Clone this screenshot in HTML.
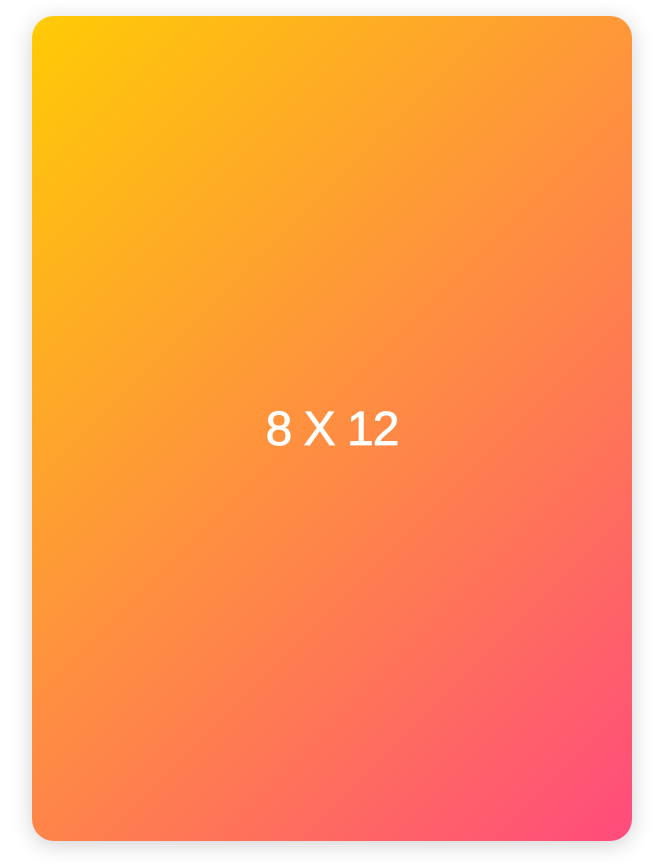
<!DOCTYPE html>
<html><head><style>
html,body{margin:0;padding:0;background:#fff;width:658px;height:862px;overflow:hidden}
.card{position:absolute;left:32px;top:16px;width:600px;height:825px;border-radius:22px;
background:linear-gradient(135deg,#ffcb05 0%,#fe9a36 40%,#fe7b52 65%,#ff4b7d 100%);
box-shadow:0 4px 22px rgba(0,0,0,0.18);}
.t{position:absolute;left:0;right:0;top:382px;text-align:center;color:#fff;
font-family:"Liberation Sans",sans-serif;font-size:48px;line-height:64px;letter-spacing:-1px;
-webkit-text-stroke:0.8px #fff}
</style></head><body>
<div class="card"><div class="t">8 X 12</div></div>
</body></html>
